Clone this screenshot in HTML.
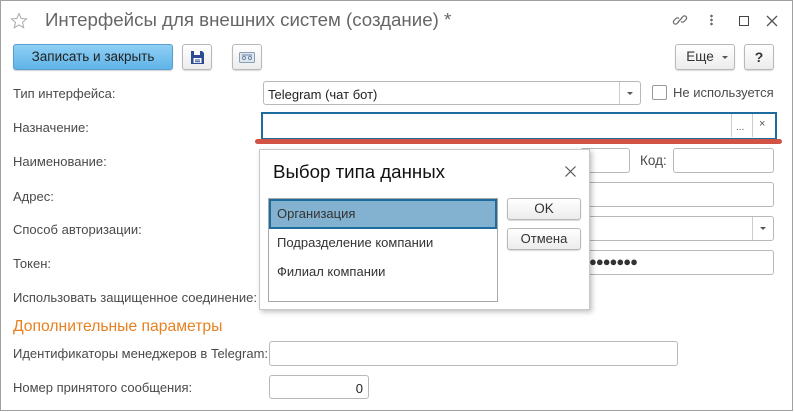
<!DOCTYPE html>
<html><head><meta charset="utf-8"><style>
*{box-sizing:border-box;margin:0;padding:0}
body{width:794px;height:412px;background:#fff;font-family:"Liberation Sans",Arial,sans-serif;font-size:13px;color:#444;position:relative;overflow:hidden}
.a{position:absolute}
.frame{left:0;top:0;width:793px;height:411px;border:1px solid #a0a0a0}
.lbl{position:absolute;color:#4a4a4a;white-space:nowrap;line-height:14px}
.inp{position:absolute;border:1px solid #b8b8b8;border-radius:3px;background:#fff}
.btn{position:absolute;border:1px solid #b8b8b8;border-radius:3px;background:linear-gradient(#fff,#ececec);box-shadow:0 1px 1px rgba(0,0,0,.15);text-align:center;color:#333}
.dd{position:absolute;right:0;top:0;bottom:0;width:21px;border-left:1px solid #ccc}
.dd:after{content:"";position:absolute;left:7px;top:10px;border:3px solid transparent;border-top:3px solid #555}
</style></head><body>
<div class="a frame"></div>
<svg class="a" style="left:10px;top:12px" width="18" height="18" viewBox="0 0 18 18"><path d="M9 1.5l2.2 5 5.3.4-4 3.5 1.2 5.3L9 12.9 4.3 15.7l1.2-5.3-4-3.5 5.3-.4z" fill="none" stroke="#aaa" stroke-width="1"/></svg>
<div class="a" style="left:45px;top:9px;font-size:18.7px;color:#666;white-space:nowrap">Интерфейсы для внешних систем (создание) *</div>
<svg class="a" style="left:672px;top:12px" width="16" height="16" viewBox="0 0 16 16"><g fill="none" stroke="#666" stroke-width="1.2"><path d="M7 9.5l-2 2a2 2 0 01-3-3l2-2a2 2 0 013 0"/><path d="M9 6.5l2-2a2 2 0 013 3l-2 2a2 2 0 01-3 0"/><path d="M6 10l4-4"/></g></svg>
<div class="a" style="left:710px;top:14px;width:3px;height:12px;background:radial-gradient(circle,#666 1.2px,transparent 1.4px) 0 0/3px 4px"></div>
<div class="a" style="left:739px;top:16px;width:10px;height:10px;border:1.5px solid #444"></div>
<svg class="a" style="left:766px;top:15px" width="12" height="12"><path d="M1 1l10 10M11 1L1 11" stroke="#555" stroke-width="1.3"/></svg>

<div class="a" style="left:13px;top:44px;width:160px;height:26px;border:1px solid #5a9fd0;border-radius:3px;background:linear-gradient(#8fd0f5,#5fb3e8);box-shadow:0 1px 1px rgba(0,0,0,.2);font-size:13.5px;color:#222;text-align:center;line-height:24px">Записать и закрыть</div>
<div class="btn" style="left:182px;top:44px;width:30px;height:26px"><svg style="margin-top:5px" width="15" height="15" viewBox="0 0 15 15"><path d="M1 1h11l2 2v11H1z" fill="#2b4b94"/><rect x="4" y="1" width="6" height="4" fill="#fff"/><rect x="3.5" y="8" width="8" height="5" fill="#fff"/><path d="M5 10h5M5 11.8h5" stroke="#2b4b94"/></svg></div>
<div class="btn" style="left:232px;top:44px;width:30px;height:26px"><svg style="margin-top:7px" width="16" height="11" viewBox="0 0 16 11"><rect x=".5" y=".5" width="15" height="10" rx="1" fill="#dfe6ee" stroke="#8a9fb5"/><circle cx="5" cy="6" r="1.6" fill="none" stroke="#6a87a8"/><circle cx="11" cy="6" r="1.6" fill="none" stroke="#6a87a8"/><path d="M3 3h10" stroke="#6a87a8"/></svg></div>
<div class="btn" style="left:675px;top:44px;width:60px;height:26px;line-height:24px;font-size:13.5px;padding-right:10px">Еще<span style="position:absolute;left:46px;top:11px;border:3px solid transparent;border-top:3px solid #555"></span></div>
<div class="btn" style="left:744px;top:44px;width:30px;height:26px;line-height:24px;font-size:14px;font-weight:bold">?</div>

<div class="lbl" style="left:13px;top:87px">Тип интерфейса:</div>
<div class="inp" style="left:263px;top:81px;width:378px;height:24px;padding:5px 4px;color:#222;font-size:13px">Telegram (чат бот)<div class="dd"></div></div>
<div class="a" style="left:652px;top:85px;width:15px;height:15px;border:1px solid #999;border-radius:2px"></div>
<div class="lbl" style="left:673px;top:86px;font-size:13px">Не используется</div>

<div class="lbl" style="left:13px;top:121px">Назначение:</div>
<div class="a" style="left:261px;top:112px;width:516px;height:28px;border:2px solid #1d6b9f;background:#fff"></div>
<div class="a" style="left:731px;top:114px;width:1px;height:23px;background:#ccc"></div>
<div class="a" style="left:752px;top:114px;width:1px;height:23px;background:#ccc"></div>
<div class="a" style="left:736px;top:122px;font-size:10px;color:#555">...</div>
<div class="a" style="left:759px;top:118px;font-size:11px;color:#555">×</div>
<div class="a" style="left:255px;top:139px;width:527px;height:5px;background:#d05346;border-radius:3px"></div>

<div class="lbl" style="left:13px;top:155px">Наименование:</div>
<div class="inp" style="left:580px;top:148px;width:50px;height:25px"></div>
<div class="lbl" style="left:640px;top:154px;font-size:13.5px">Код:</div>
<div class="inp" style="left:673px;top:148px;width:101px;height:25px"></div>
<div class="lbl" style="left:13px;top:190px">Адрес:</div>
<div class="inp" style="left:580px;top:182px;width:194px;height:25px"></div>
<div class="lbl" style="left:13px;top:223px">Способ авторизации:</div>
<div class="inp" style="left:580px;top:216px;width:194px;height:25px"><div class="dd"></div></div>
<div class="lbl" style="left:13px;top:257px">Токен:</div>
<div class="inp" style="left:580px;top:250px;width:194px;height:25px"><span style="position:absolute;left:8px;top:3px;font-size:13px;color:#333;letter-spacing:-1px">●●●●●●●</span></div>
<div class="lbl" style="left:13px;top:291px">Использовать защищенное соединение:</div>

<div class="a" style="left:13px;top:318px;font-size:15.7px;color:#e8801f;white-space:nowrap">Дополнительные параметры</div>
<div class="lbl" style="left:13px;top:347px">Идентификаторы менеджеров в Telegram:</div>
<div class="inp" style="left:269px;top:341px;width:409px;height:25px"></div>
<div class="lbl" style="left:13px;top:381px">Номер принятого сообщения:</div>
<div class="inp" style="left:269px;top:375px;width:100px;height:24px;text-align:right;padding:5px 5px;color:#222;font-size:13px">0</div>

<div class="a" style="left:259px;top:149px;width:331px;height:161px;background:#fff;border:1px solid #c8c8c8;box-shadow:2px 2px 5px rgba(0,0,0,.25)">
 <div class="a" style="left:13px;top:11px;font-size:18.7px;color:#111;white-space:nowrap">Выбор типа данных</div>
 <svg class="a" style="left:305px;top:16px" width="11" height="11"><path d="M.5 .5l10 10M10.5 .5l-10 10" stroke="#555" stroke-width="1.2"/></svg>
 <div class="a" style="left:8px;top:48px;width:230px;height:104px;border:1px solid #a8a8a8">
  <div class="a" style="left:0;top:0;width:228px;height:30px;background:#83b2d0;border:2px solid #1d6b9f"></div>
  <div class="lbl" style="left:8px;top:8px;color:#333">Организация</div>
  <div class="lbl" style="left:8px;top:37px;color:#333">Подразделение компании</div>
  <div class="lbl" style="left:8px;top:66px;color:#333">Филиал компании</div>
 </div>
 <div class="btn" style="left:247px;top:48px;width:74px;height:22px;line-height:20px;font-size:13.5px">OK</div>
 <div class="btn" style="left:247px;top:78px;width:74px;height:22px;line-height:20px;font-size:13px">Отмена</div>
</div>
</body></html>
